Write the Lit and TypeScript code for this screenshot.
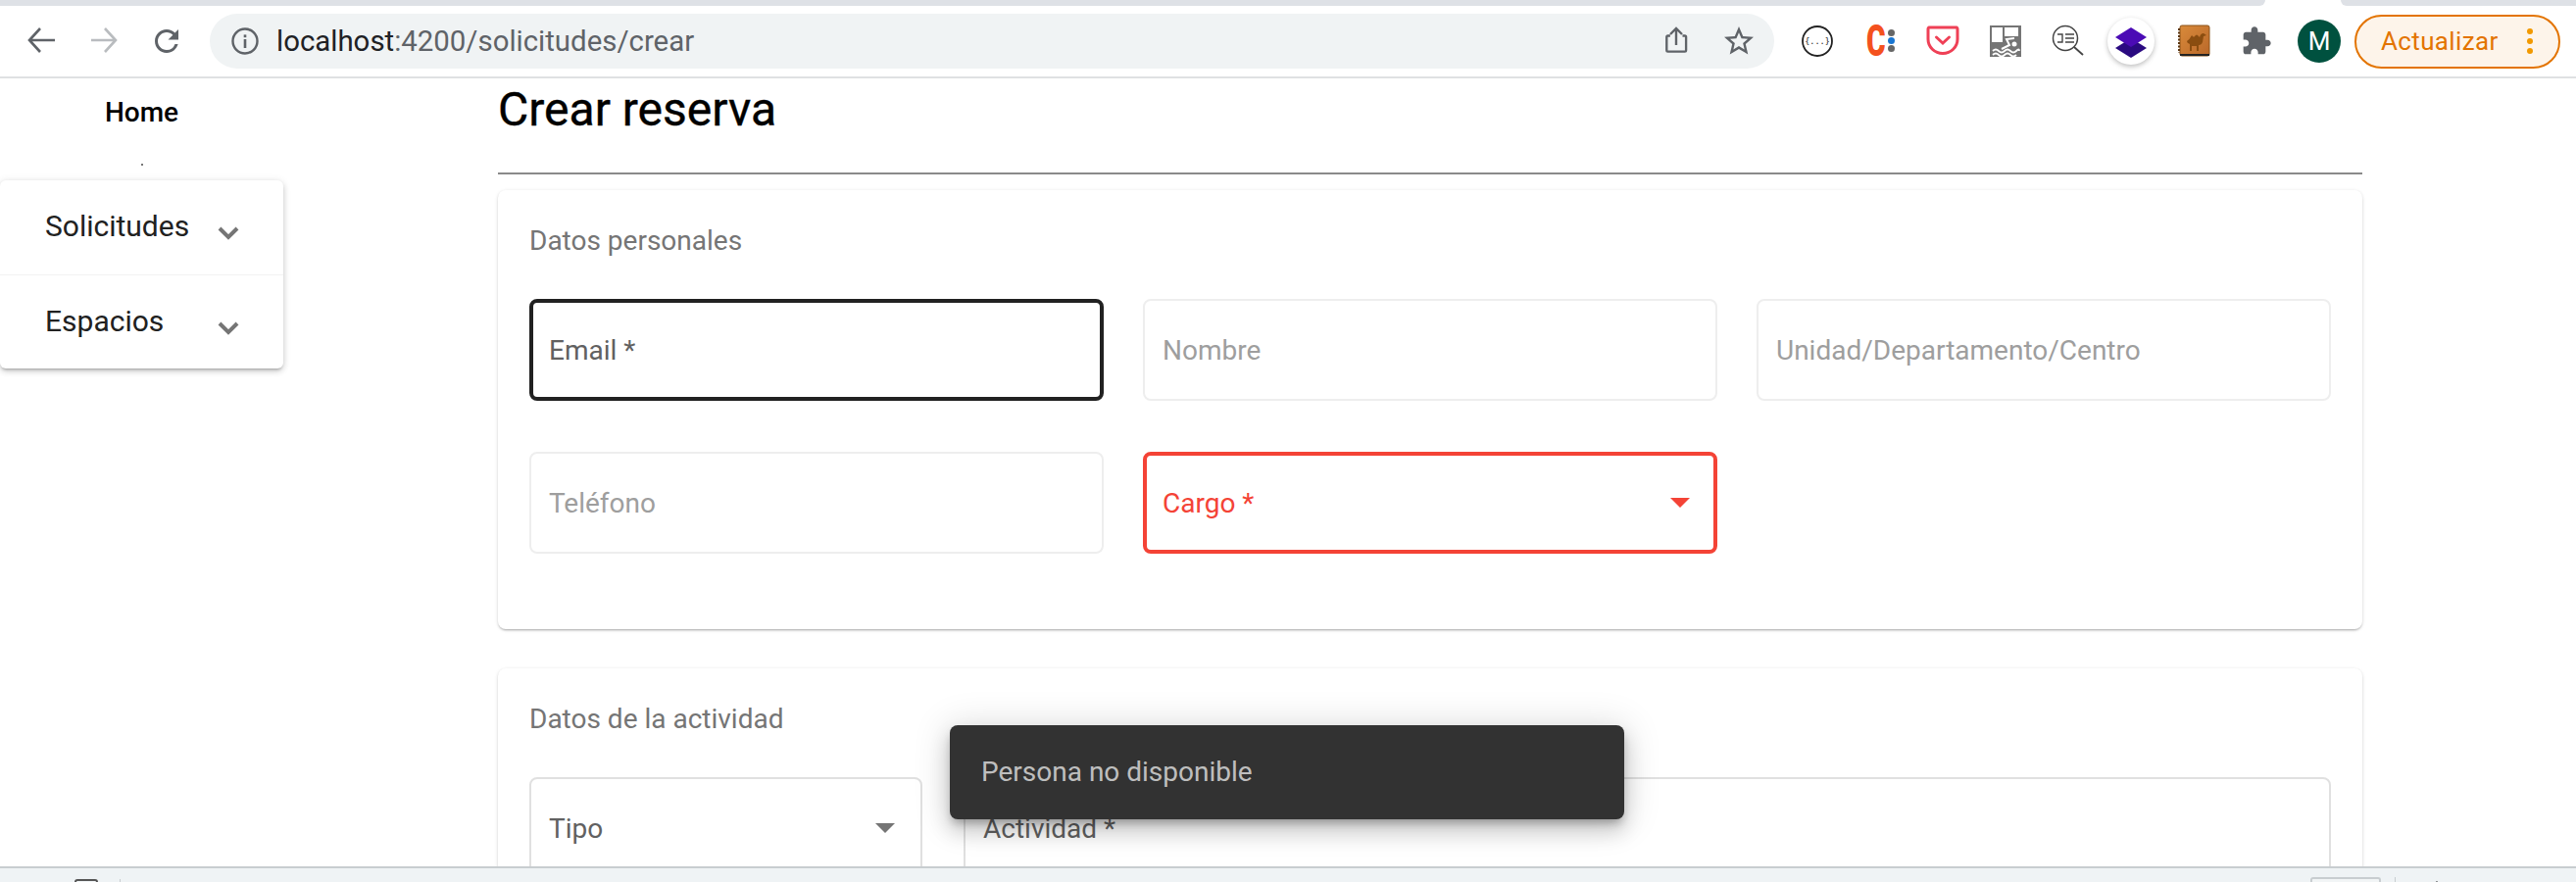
import { LitElement, html, css, svg } from 'lit'
import { customElement } from 'lit/decorators.js'
import { classMap } from 'lit/directives/class-map.js'

const GREY = '#5f6368'

@customElement('browser-bar')
export class BrowserBar extends LitElement {
	static styles = css`
		:host {
			display: block;
			font-family: Roboto, 'Noto Sans', sans-serif;
			background: #fff;
		}
		.tabs {
			display: flex;
			height: 6px;
		}
		.tabs div {
			background: #dee1e6;
		}
		.tab-left {
			width: 2311px;
			border-bottom-right-radius: 10px;
		}
		.tab-gap {
			width: 77px;
			background: #fff !important;
		}
		.tab-right {
			flex: 1;
			border-bottom-left-radius: 10px;
		}
		.toolbar {
			display: flex;
			align-items: center;
			height: 72px;
			padding-left: 10px;
			border-bottom: 2px solid #dfe1e3;
		}
		.cell {
			width: 64px;
			height: 56px;
			flex: none;
			display: flex;
			align-items: center;
			justify-content: center;
		}
		.omnibox {
			width: 1596px;
			height: 56px;
			margin: 0 12px;
			flex: none;
			display: flex;
			align-items: center;
			padding: 0 4px;
			box-sizing: border-box;
			border-radius: 28px;
			background: #f0f3f4;
		}
		.url {
			flex: 1;
			font-size: 29.4px;
			color: #5f6368;
		}
		.url b {
			font-weight: 400;
			color: #202124;
		}
		.c-logo {
			position: relative;
			width: 36px;
			height: 40px;
			display: flex;
			align-items: center;
		}
		.c-letter {
			margin-left: 4px;
			font-size: 44px;
			font-weight: 900;
			line-height: 40px;
			color: #f4511e;
			transform: scaleX(0.68);
			transform-origin: left center;
		}
		.c-dots {
			position: absolute;
			right: 3px;
			top: 8px;
			display: flex;
			flex-direction: column;
			gap: 1px;
		}
		.c-dots i {
			width: 7px;
			height: 7px;
			border-radius: 50%;
			background: #666;
		}
		.c-dots i:nth-child(2) {
			background: #1976d2;
		}
		.layers {
			width: 48px;
			height: 48px;
			border-radius: 50%;
			background: #fff;
			box-shadow: 0 2px 5px rgba(0, 0, 0, 0.25);
			display: flex;
			align-items: center;
			justify-content: center;
		}
		.avatar {
			width: 44px;
			height: 44px;
			border-radius: 50%;
			background: #00513f;
			color: #fff;
			font-size: 26px;
			display: flex;
			align-items: center;
			justify-content: center;
		}
		.update {
			width: 210px;
			height: 55px;
			margin-left: 4px;
			flex: none;
			box-sizing: border-box;
			display: flex;
			align-items: center;
			justify-content: space-between;
			padding: 0 26px 0 25px;
			border: 2px solid #e37400;
			border-radius: 28px;
			background: #fdf4ea;
			color: #e37400;
			font-size: 26px;
			letter-spacing: 0.35px;
		}
		.dots {
			display: flex;
			flex-direction: column;
			gap: 4px;
		}
		.dots i {
			width: 6px;
			height: 6px;
			border-radius: 50%;
			background: #f29900;
		}
	`

	private icon(size: number, body: unknown, box = 24) {
		return html`<svg width=${size} height=${size} viewBox="0 0 ${box} ${box}">${body}</svg>`
	}

	private arrow(color: string, flip: boolean) {
		const points = flip ? 'M3 15H28M17 3L28 15L17 27' : 'M30 15H5M15 3L4 15L15 27'
		return this.icon(32, svg`<path d=${points} fill="none" stroke=${color} stroke-width="2.6"/>`, 32)
	}

	render() {
		return html`
			<div class="tabs">
				<div class="tab-left"></div>
				<div class="tab-gap"></div>
				<div class="tab-right"></div>
			</div>
			<div class="toolbar">
				<div class="cell">${this.arrow(GREY, false)}</div>
				<div class="cell">${this.arrow('#b9bcbf', true)}</div>
				<div class="cell">
					${this.icon(36, svg`<path fill=${GREY} d="M17.65 6.35A7.95 7.95 0 0 0 12 4c-4.42 0-7.99 3.58-7.99 8s3.57 8 7.99 8c3.73 0 6.84-2.55 7.73-6h-2.08A5.99 5.99 0 0 1 12 18c-3.31 0-6-2.69-6-6s2.69-6 6-6c1.66 0 3.14.69 4.22 1.78L13 11h7V4l-2.35 2.35z"/>`)}
				</div>
				<div class="omnibox">
					<div class="cell">
						${this.icon(30, svg`
							<circle cx="15" cy="15" r="12.5" fill="none" stroke=${GREY} stroke-width="2.4"/>
							<rect x="13.7" y="13" width="2.6" height="9" fill=${GREY}/>
							<rect x="13.7" y="8.4" width="2.6" height="2.8" fill=${GREY}/>`, 30)}
					</div>
					<div class="url"><b>localhost</b>:4200/solicitudes/crear</div>
					<div class="cell">
						${this.icon(36, svg`
							<path d="M11 15H8.5a1.5 1.5 0 0 0-1.5 1.5v15A1.5 1.5 0 0 0 8.5 33h19a1.5 1.5 0 0 0 1.5-1.5v-15a1.5 1.5 0 0 0-1.5-1.5H25" transform="translate(2 -1) scale(.9)" fill="none" stroke=${GREY} stroke-width="2.6"/>
							<path d="M18 22V5M12 11l6-6 6 6" fill="none" stroke=${GREY} stroke-width="2.4"/>`, 36)}
					</div>
					<div class="cell">
						${this.icon(36, svg`<path fill=${GREY} d="M22 9.24l-7.19-.62L12 2 9.19 8.63 2 9.24l5.46 4.73L5.82 21 12 17.27 18.18 21l-1.63-7.03L22 9.24zM12 15.4l-3.76 2.27 1-4.28-3.32-2.88 4.38-.38L12 6.1l1.71 4.04 4.38.38-3.32 2.88 1 4.28L12 15.4z"/>`)}
					</div>
				</div>
				<div class="cell">
					${this.icon(34, svg`
						<circle cx="17" cy="17" r="15" fill="#fff" stroke="#222" stroke-width="1.8"/>
						<text x="17" y="20" font-family="DejaVu Sans Mono" font-size="8.5" text-anchor="middle" fill="#222">{...}</text>`, 34)}
				</div>
				<div class="cell">
					<div class="c-logo">
						<span class="c-letter">C</span>
						<span class="c-dots"><i></i><i></i><i></i></span>
					</div>
				</div>
				<div class="cell">
					${this.icon(34, svg`
						<path d="M3 4H31A1.5 1.5 0 0 1 32 5.500V16A15 14.500 0 0 1 2 16V5.500A1.500 1.500 0 0 1 3 4Z" transform="translate(0 -1)" fill="#fff" stroke="#ef4056" stroke-width="3"/>
						<path d="M10.500 13L17 19L23.500 13" fill="none" stroke="#ef4056" stroke-width="3" stroke-linecap="round"/>`, 34)}
				</div>
				<div class="cell">
					${this.icon(32, svg`
						<rect width="32" height="32" fill="#757575"/>
						<rect x="2" y="2" width="11" height="15" fill="#fff"/>
						<rect x="15" y="2" width="14" height="9" fill="#fff"/>
						<circle cx="25" cy="19" r="2.500" fill="#fff"/>
						<path d="M12 24L20 20L17 14L25 13" fill="none" stroke="#fff" stroke-width="2"/>
						<path d="M3 26q3-3 6 0t6 0t6 0t6 0t3 0M3 30q3-3 6 0t6 0t6 0t6 0" fill="none" stroke="#fff" stroke-width="1.800"/>`, 32)}
				</div>
				<div class="cell">
					${this.icon(36, svg`
						<circle cx="15" cy="15" r="12.500" fill="#fff" stroke="#444" stroke-width="1.500"/>
						<path d="M24 24L33 32" stroke="#444" stroke-width="1.800"/>
						<path d="M7 11H12V19H7M15 11H24M15 15H24M15 19H24" fill="none" stroke="#444" stroke-width="1.400"/>`, 36)}
				</div>
				<div class="cell">
					<div class="layers">
						${this.icon(36, svg`
							<path d="M18 13L34 23L18 33L2 23Z" transform="translate(0 2)" fill="#2a0a80"/>
							<path d="M18 3L34 13L18 23L2 13Z" transform="translate(0 1)" fill="#4b0bb5"/>`, 36)}
					</div>
				</div>
				<div class="cell">
					${this.icon(34, svg`
						<defs>
							<linearGradient id="book" x1="0" y1="0" x2="1" y2="1">
								<stop offset="0" stop-color="#d98a3a"/>
								<stop offset="1" stop-color="#b9682a"/>
							</linearGradient>
						</defs>
						<rect x="3" y="1" width="30" height="31" rx="2" fill="url(#book)" stroke="#8a5218" stroke-width="1"/>
						<path d="M3 31H33" stroke="#222" stroke-width="2"/>
						<path d="M2 4V29" stroke="#5b3510" stroke-width="2" stroke-dasharray="2 1.500"/>
						<path d="M10 17q3-2 5-6q2 3 3 1q2-3 4 0l1 1q1-4 4-4l3 2l-3 1l-1 6q-1 3-4 3v6h-2v-5h-5v5h-2v-7q-3-1-3-3Z" fill="#8a4d10"/>`, 34)}
				</div>
				<div class="cell">
					${this.icon(32, svg`<path fill=${GREY} d="M20.5 11H19V7c0-1.100-.900-2-2-2h-4V3.500C13 2.120 11.880 1 10.500 1S8 2.120 8 3.500V5H4c-1.100 0-1.990.900-1.990 2v3.800H3.500c1.490 0 2.700 1.210 2.700 2.700s-1.210 2.700-2.700 2.700H2V20c0 1.100.900 2 2 2h3.800v-1.500c0-1.490 1.210-2.700 2.700-2.700 1.490 0 2.700 1.210 2.700 2.700V22H17c1.100 0 2-.900 2-2v-4h1.500c1.380 0 2.500-1.120 2.500-2.500S21.880 11 20.500 11z"/>`)}
				</div>
				<div class="cell"><div class="avatar">M</div></div>
				<div class="update">
					<span>Actualizar</span>
					<span class="dots"><i></i><i></i><i></i></span>
				</div>
			</div>
		`
	}
}

type Field = {
	label: string
	state?: 'focus' | 'error' | 'active'
	select?: boolean
}

const PERSONAL: Field[] = [
	{ label: 'Email *', state: 'focus' },
	{ label: 'Nombre' },
	{ label: 'Unidad/Departamento/Centro' },
	{ label: 'Teléfono' },
	{ label: 'Cargo *', state: 'error', select: true },
]

const ACTIVITY: Field[] = [
	{ label: 'Tipo', state: 'active', select: true },
	{ label: 'Actividad *', state: 'active' },
]

@customElement('app-root')
export class AppRoot extends LitElement {
	static styles = css`
		:host {
			display: block;
			position: relative;
			width: 2628px;
			height: 900px;
			overflow: hidden;
			background: #fff;
			font-family: Roboto, 'Noto Sans', sans-serif;
		}
		.page {
			display: grid;
			grid-template-columns: 289px 1902px;
			column-gap: 219px;
			height: 804px;
			overflow: hidden;
		}
		.home {
			font-size: 28px;
			font-weight: 500;
			line-height: 70px;
			text-align: center;
			color: #000;
		}
		.home-dot {
			width: 2px;
			height: 2px;
			margin: 17px auto 15px;
			background: #777;
		}
		.menu {
			border-radius: 6px;
			background: #fff;
			box-shadow: 0 3px 3px -2px rgba(0, 0, 0, 0.25), 0 3px 6px rgba(0, 0, 0, 0.14), 0 1px 8px rgba(0, 0, 0, 0.1);
		}
		.menu-item {
			height: 96px;
			box-sizing: border-box;
			display: flex;
			align-items: center;
			justify-content: space-between;
			padding: 0 45px 3px 46px;
			font-size: 30px;
			color: #212121;
		}
		.menu-item + .menu-item {
			border-top: 1px solid #f2f2f2;
		}
		.menu-item svg {
			margin-top: 15px;
		}
		h1 {
			margin: 0 0 16px;
			height: 98px;
			box-sizing: border-box;
			font-size: 48px;
			font-weight: 400;
			line-height: 64px;
			color: #000;
			-webkit-text-stroke: 0.4px #000;
			border-bottom: 2px solid #8a8a8a;
		}
		.card {
			padding: 36px 32px 77px 32px;
			margin-bottom: 40px;
			border-radius: 8px;
			background: #fff;
			box-shadow: 0 2px 2px -1px rgba(0, 0, 0, 0.22), 0 1px 3px rgba(0, 0, 0, 0.12), 0 1px 5px rgba(0, 0, 0, 0.06);
		}
		.card-title {
			height: 32px;
			margin-bottom: 43px;
			font-size: 28px;
			line-height: 32px;
			color: #757575;
		}
		.row {
			display: grid;
			grid-template-columns: repeat(3, 1fr);
			gap: 52px 40px;
		}
		.row.activity {
			grid-template-columns: 401px 1fr;
			column-gap: 42px;
		}
		.field {
			height: 104px;
			box-sizing: border-box;
			display: flex;
			align-items: center;
			justify-content: space-between;
			padding: 0 26px 0 18px;
			border: 2px solid #eeeeee;
			border-radius: 8px;
			font-size: 28px;
			color: #9e9e9e;
		}
		.field.focus {
			padding-left: 16px;
			border: 4px solid #212121;
			color: #616161;
		}
		.field.error {
			padding: 0 24px 0 16px;
			border: 4px solid #f44336;
			color: #f44336;
		}
		.field.active {
			border-color: #e0e0e0;
			color: #616161;
		}
		.caret {
			width: 0;
			height: 0;
			border-left: 10px solid transparent;
			border-right: 10px solid transparent;
			border-top: 10px solid currentColor;
		}
		.field.active .caret {
			color: #757575;
		}
		.status {
			height: 16px;
			box-sizing: border-box;
			display: flex;
			align-items: flex-start;
			border-top: 2px solid #c8cdd0;
			background: #eff3f5;
			padding: 11px 0 0 76px;
		}
		.status-box {
			width: 24px;
			height: 12px;
			box-sizing: border-box;
			border: 2px solid #555;
			border-radius: 3px 3px 0 0;
		}
		.status-sep {
			width: 1px;
			height: 12px;
			margin-left: 22px;
			background: #c8cdd0;
		}
		.status-tray {
			width: 72px;
			height: 12px;
			margin-left: auto;
			margin-top: -2px;
			box-sizing: border-box;
			border: 2px solid #c8cdd0;
			border-bottom: 0;
			border-radius: 3px 3px 0 0;
			background: #f2f5f6;
		}
		.status-mark {
			width: 1px;
			height: 12px;
			margin: -2px 0 0 14px;
			background: #c8cdd0;
		}
		.status-glyph {
			width: 0;
			height: 0;
			margin: 2px 138px 0 38px;
			border-left: 4px solid transparent;
			border-right: 4px solid transparent;
			border-bottom: 4px solid #333;
		}
		.snackbar {
			position: absolute;
			left: 969px;
			top: 740px;
			width: 688px;
			height: 96px;
			box-sizing: border-box;
			display: flex;
			align-items: center;
			padding: 0 0 2px 32px;
			border-radius: 8px;
			background: #323232;
			color: rgba(255, 255, 255, 0.7);
			font-size: 28px;
			box-shadow: 0 6px 10px -3px rgba(0, 0, 0, 0.3), 0 12px 20px 2px rgba(0, 0, 0, 0.14), 0 2px 36px 4px rgba(0, 0, 0, 0.12);
		}
	`

	private chevron() {
		return html`<svg width="22" height="14" viewBox="0 0 22 14">
			<path d="M2 2L11 11L20 2" fill="none" stroke="#757575" stroke-width="4"/>
		</svg>`
	}

	private field(f: Field) {
		const classes = { field: true, [f.state ?? 'idle']: true }
		return html`<div class=${classMap(classes)}>
			<span>${f.label}</span>
			${f.select ? html`<span class="caret"></span>` : null}
		</div>`
	}

	render() {
		return html`
			<browser-bar></browser-bar>
			<div class="page">
				<aside>
					<div class="home">Home</div>
					<div class="home-dot"></div>
					<div class="menu">
						<div class="menu-item"><span>Solicitudes</span>${this.chevron()}</div>
						<div class="menu-item"><span>Espacios</span>${this.chevron()}</div>
					</div>
				</aside>
				<main>
					<h1>Crear reserva</h1>
					<section class="card">
						<div class="card-title">Datos personales</div>
						<div class="row">${PERSONAL.map((f) => this.field(f))}</div>
					</section>
					<section class="card">
						<div class="card-title">Datos de la actividad</div>
						<div class="row activity">${ACTIVITY.map((f) => this.field(f))}</div>
					</section>
				</main>
			</div>
			<div class="status">
				<div class="status-box"></div>
				<div class="status-sep"></div>
				<div class="status-tray"></div>
				<div class="status-mark"></div>
				<div class="status-glyph"></div>
			</div>
			<div class="snackbar">Persona no disponible</div>
		`
	}
}
